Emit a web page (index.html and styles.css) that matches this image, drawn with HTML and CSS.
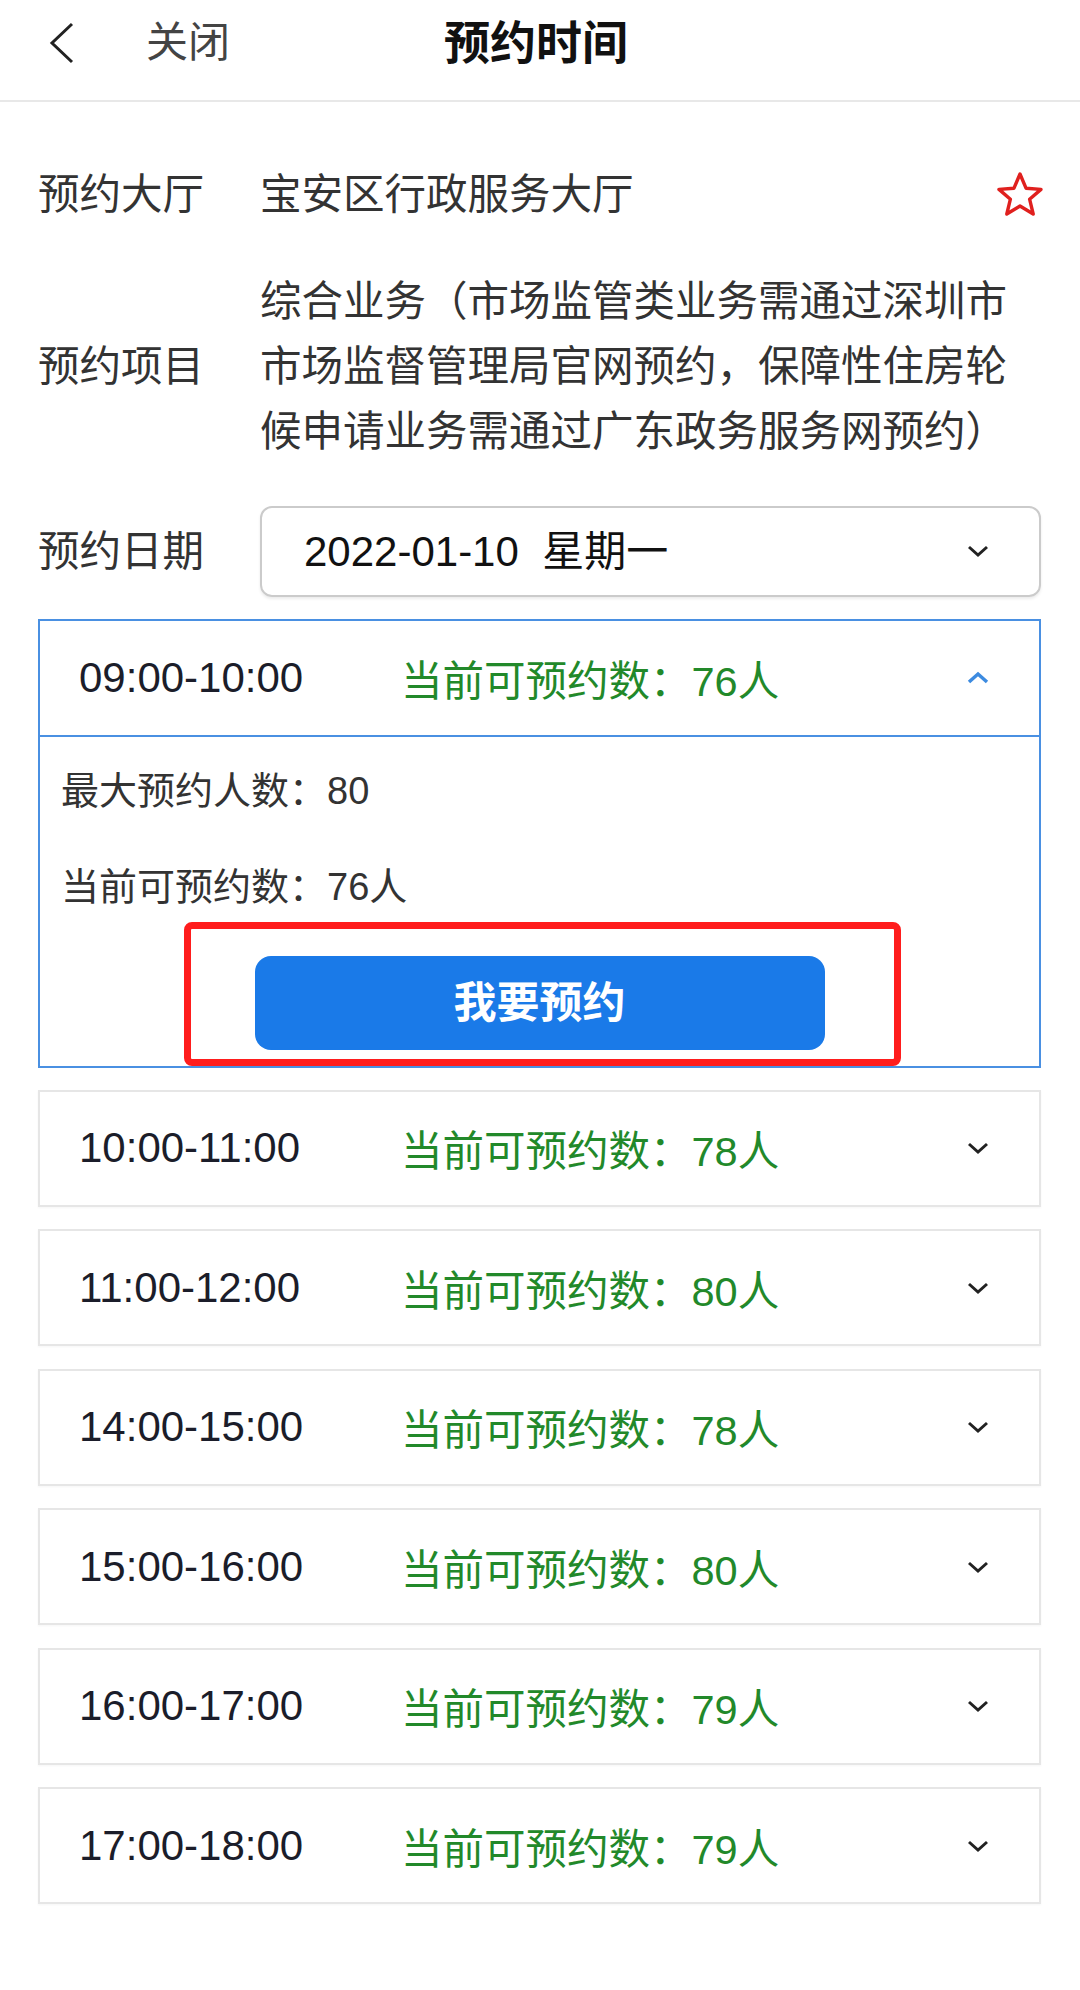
FILE: index.html
```html
<!DOCTYPE html>
<html lang="zh-CN">
<head>
<meta charset="utf-8">
<title>预约时间</title>
<link rel="stylesheet" href="styles.css">
</head>
<body>
<div class="header">
  <svg class="back" width="30" height="44" viewBox="0 0 30 44"><polyline points="26,3 6,22 26,41" fill="none" stroke="#222" stroke-width="3" stroke-linejoin="miter"/></svg>
  <span class="close">关闭</span>
  <span class="title">预约时间</span>
</div>
<div class="main">
  <div class="info-row first">
    <div class="label">预约大厅</div>
    <div class="value">宝安区行政服务大厅</div>
    <svg class="star" width="48" height="46" viewBox="0 0 48 46"><polygon points="24,3 30,17.2 45,18.4 33.6,28.2 37.2,43 24,35 10.8,43 14.4,28.2 3,18.4 18,17.2" fill="none" stroke="#e0201e" stroke-width="3.4" stroke-linejoin="round"/></svg>
  </div>
  <div class="info-row">
    <div class="label">预约项目</div>
    <div class="value multi">综合业务（市场监管类业务需通过深圳市市场监督管理局官网预约，保障性住房轮候申请业务需通过广东政务服务网预约）</div>
  </div>
  <div class="info-row">
    <div class="label">预约日期</div>
    <div class="select">
      <span class="date">2022-01-10&nbsp;&nbsp;星期一</span>
      <svg class="chev" width="24" height="14" viewBox="0 0 24 14"><polyline points="3,3 12,11 21,3" fill="none" stroke="#222" stroke-width="3"/></svg>
    </div>
  </div>

  <div class="panel">
    <div class="slot-head">
      <span class="time">09:00-10:00</span>
      <span class="avail">当前可预约数：76人</span>
      <svg class="chev" width="24" height="14" viewBox="0 0 24 14"><polyline points="3,11 12,3 21,11" fill="none" stroke="#3d8be0" stroke-width="3.5"/></svg>
    </div>
    <div class="panel-body">
      <div class="line">最大预约人数：80</div>
      <div class="line second">当前可预约数：76人</div>
      <div class="btn">我要预约</div>
    </div>
    <div class="mark"></div>
  </div>

  <div class="slot">
    <span class="time">10:00-11:00</span>
    <span class="avail">当前可预约数：78人</span>
    <svg class="chev" width="24" height="14" viewBox="0 0 24 14"><polyline points="3,3 12,11 21,3" fill="none" stroke="#222" stroke-width="3"/></svg>
  </div>
  <div class="slot">
    <span class="time">11:00-12:00</span>
    <span class="avail">当前可预约数：80人</span>
    <svg class="chev" width="24" height="14" viewBox="0 0 24 14"><polyline points="3,3 12,11 21,3" fill="none" stroke="#222" stroke-width="3"/></svg>
  </div>
  <div class="slot">
    <span class="time">14:00-15:00</span>
    <span class="avail">当前可预约数：78人</span>
    <svg class="chev" width="24" height="14" viewBox="0 0 24 14"><polyline points="3,3 12,11 21,3" fill="none" stroke="#222" stroke-width="3"/></svg>
  </div>
  <div class="slot">
    <span class="time">15:00-16:00</span>
    <span class="avail">当前可预约数：80人</span>
    <svg class="chev" width="24" height="14" viewBox="0 0 24 14"><polyline points="3,3 12,11 21,3" fill="none" stroke="#222" stroke-width="3"/></svg>
  </div>
  <div class="slot">
    <span class="time">16:00-17:00</span>
    <span class="avail">当前可预约数：79人</span>
    <svg class="chev" width="24" height="14" viewBox="0 0 24 14"><polyline points="3,3 12,11 21,3" fill="none" stroke="#222" stroke-width="3"/></svg>
  </div>
  <div class="slot">
    <span class="time">17:00-18:00</span>
    <span class="avail">当前可预约数：79人</span>
    <svg class="chev" width="24" height="14" viewBox="0 0 24 14"><polyline points="3,3 12,11 21,3" fill="none" stroke="#222" stroke-width="3"/></svg>
  </div>
</div>
</body>
</html>
```
FILE: styles.css
```css
* { box-sizing: border-box; }
html, body { margin: 0; padding: 0; background: #fff; }
body {
  font-family: "Liberation Sans", "Noto Sans CJK SC", sans-serif;
  color: #333;
  width: 1080px;
}
.header {
  height: 102px;
  padding-bottom: 14px;
  border-bottom: 2px solid #e8e8e8;
  display: flex;
  align-items: center;
}
.back { margin-left: 46px; flex: none; }
.close { margin-left: 70px; font-size: 42px; color: #444; line-height: 1; }
.title { margin-left: 214px; font-size: 46px; font-weight: bold; color: #111; line-height: 1; }

.main { padding: 0 39px 40px 38px; }

.info-row {
  display: flex;
  align-items: center;
  font-size: 41.5px;
  line-height: 65px;
  margin-top: 42px;
}
.info-row.first { margin-top: 59.5px; }
.label { width: 222px; flex: none; color: #333; }
.value { color: #333; }
.value.multi { width: 756px; }
.star { margin-left: auto; margin-right: -3px; flex: none; }

.select {
  flex: 1;
  height: 91px;
  border: 2px solid #cbcbcb;
  border-radius: 12px;
  box-shadow: 0 2px 3px rgba(0,0,0,0.08);
  display: flex;
  align-items: center;
  justify-content: space-between;
  padding: 0 49px 0 42px;
}
.date { font-size: 42px; color: #111; }
.chev { flex: none; }

.panel {
  position: relative;
  margin-top: 22px;
  border: 2px solid #4a90e2;
}
.slot-head, .slot {
  display: flex;
  align-items: center;
  padding: 0 49px 0 39px;
}
.slot-head {
  height: 116px;
  border-bottom: 2px solid #4a90e2;
}
.time { width: 322px; flex: none; font-size: 42px; color: #1b1d2a; }
.avail { flex: 1; font-size: 41.5px; color: #22892a; }

.panel-body {
  padding: 29px 21px 16px;
  font-size: 38px;
  line-height: 50px;
  color: #333;
}
.line.second { margin-top: 46px; }
.btn {
  margin: 44px auto 0;
  width: 570px;
  height: 94px;
  border-radius: 16px;
  background: #1a7ae8;
  color: #fff;
  font-size: 43px;
  font-weight: bold;
  display: flex;
  align-items: center;
  justify-content: center;
}
.mark {
  position: absolute;
  left: 144px;
  top: 301px;
  width: 717px;
  height: 144px;
  border: 7px solid #ff1d1d;
  border-radius: 8px;
}

.slot {
  height: 117px;
  margin-top: 22.5px;
  border: 2px solid #e6e6e6;
  box-shadow: 0 1px 2px rgba(0,0,0,0.04);
}
.panel + .slot { margin-top: 22px; }
```
